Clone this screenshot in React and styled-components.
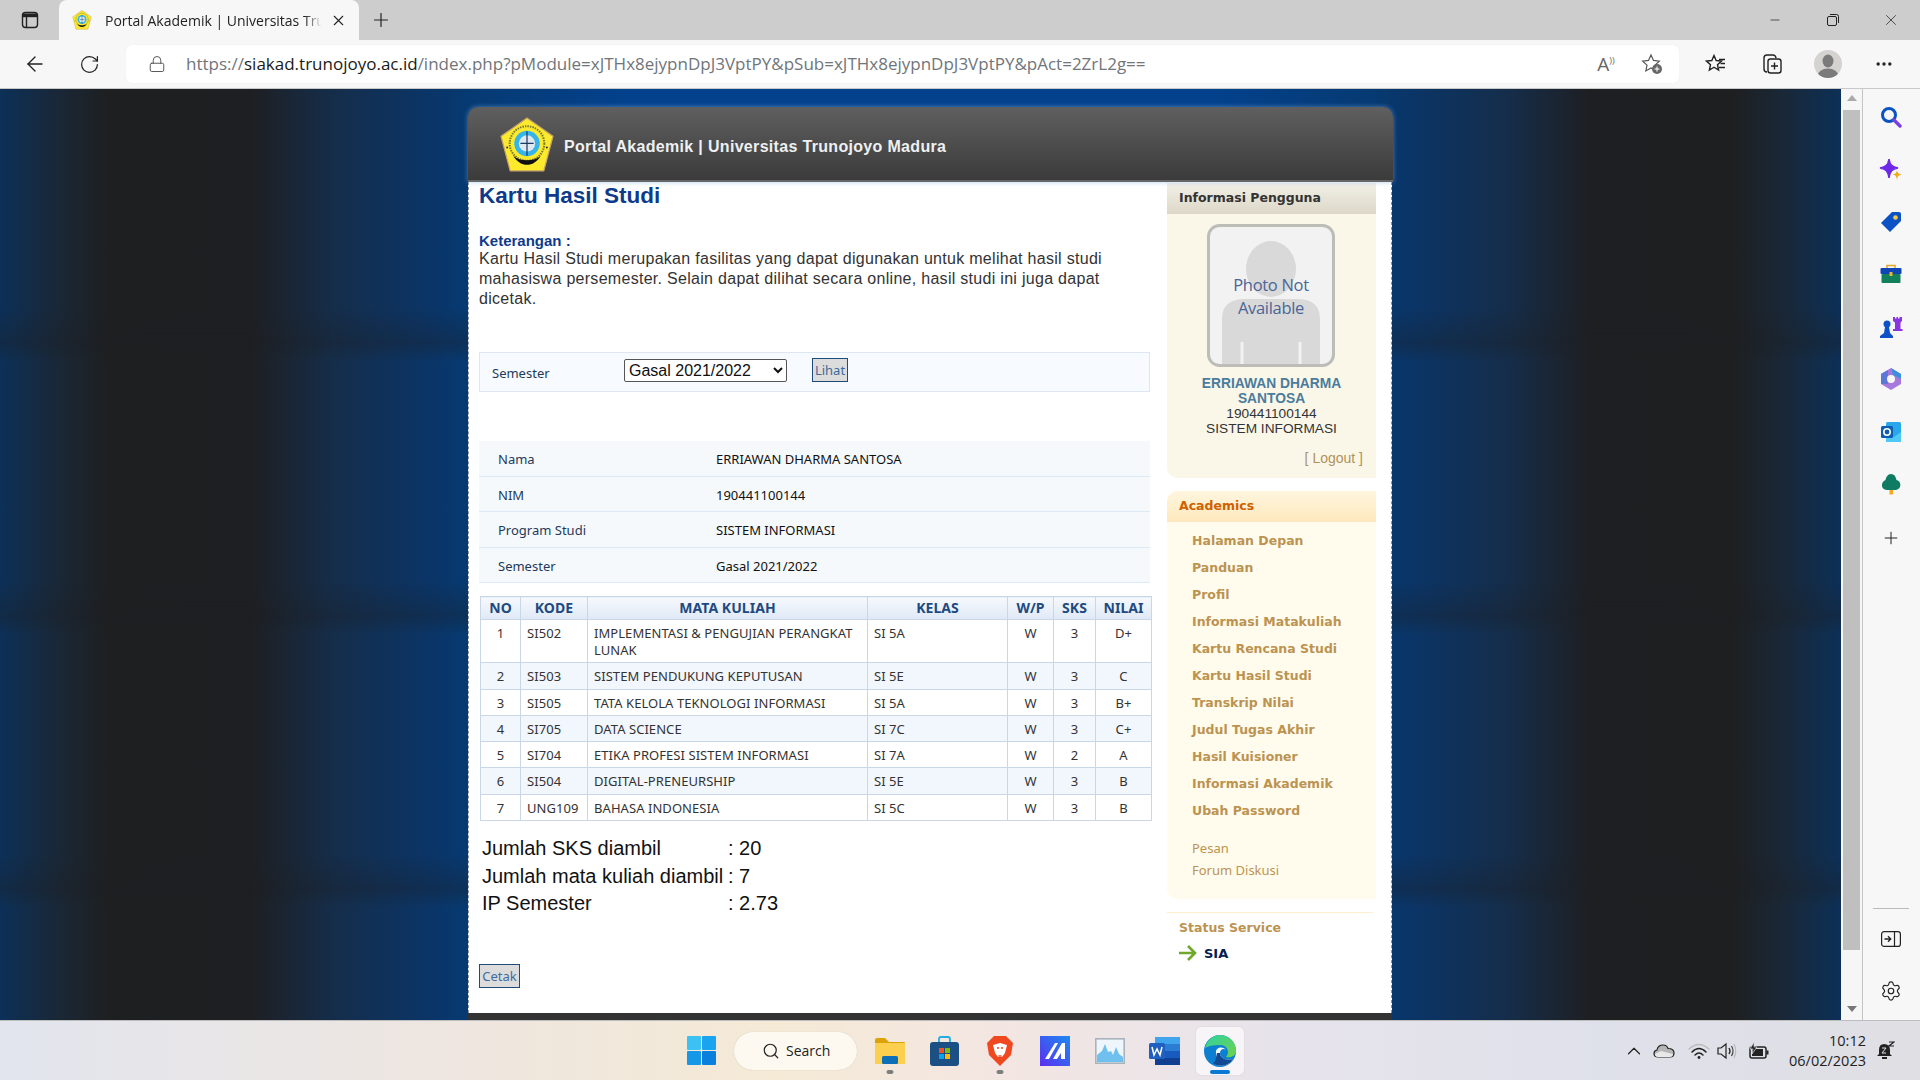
import React from 'react';
import styled, { createGlobalStyle } from 'styled-components';
import {
  ArrowLeft, RotateCw, Lock, Plus, X, Minus, Search, ChevronUp, Settings, MoreHorizontal,
} from 'lucide-react';

const Global = createGlobalStyle`
  html, body { margin: 0; padding: 0; overflow: hidden; }
  body { font-family: "Liberation Sans", Arial, sans-serif; }
  * { box-sizing: border-box; }
`;

const TAHOMA = '"Noto Sans", "DejaVu Sans", sans-serif';
const BOLD_TAHOMA = '"DejaVu Sans", sans-serif';
const SEGOE = '"Open Sans", "Noto Sans", sans-serif';

const Shell = styled.div`
  width: 1920px;
  height: 1080px;
  display: flex;
  flex-direction: column;
  overflow: hidden;
`;

/* browser chrome */
const TabStrip = styled.div`
  height: 40px;
  flex: none;
  background: #cdcdcd;
  display: flex;
  align-items: flex-end;
`;

const TabToggle = styled.div`
  width: 59px;
  height: 40px;
  display: flex;
  align-items: center;
  justify-content: center;
`;

const Tab = styled.div`
  width: 300px;
  height: 40px;
  background: #f7f7f7;
  border-radius: 8px 8px 0 0;
  display: flex;
  align-items: center;
  padding: 0 12px 0 13px;
  font-family: ${SEGOE};
  font-size: 14px;
  color: #222;
`;

const TabTitle = styled.span`
  width: 217px;
  margin-left: 13px;
  white-space: nowrap;
  overflow: hidden;
  -webkit-mask-image: linear-gradient(90deg, #000 92%, transparent);
  mask-image: linear-gradient(90deg, #000 92%, transparent);
`;

const TabClose = styled.span`
  margin-left: 8px;
  display: flex;
`;

const NewTab = styled.div`
  width: 44px;
  height: 40px;
  display: flex;
  align-items: center;
  justify-content: center;
`;

const WindowControls = styled.div`
  margin-left: auto;
  height: 40px;
  display: flex;
  align-items: center;
`;

const WindowButton = styled.div`
  width: 58px;
  height: 40px;
  display: flex;
  align-items: center;
  justify-content: center;
`;

const Toolbar = styled.div`
  height: 49px;
  flex: none;
  background: #f7f7f7;
  border-bottom: 1px solid #c8c8c8;
  display: flex;
  align-items: center;
  padding-left: 7px;
`;

const NavButton = styled.div`
  width: ${(p) => p.$w || 55}px;
  height: 40px;
  display: flex;
  align-items: center;
  justify-content: center;
  color: #222;
`;

const AddressBar = styled.div`
  width: 1553px;
  height: 38px;
  margin: 0 9px 0 9px;
  background: #fff;
  border-radius: 6px;
  display: flex;
  align-items: center;
  padding: 0 4px 0 22px;
  font-family: ${SEGOE};
  font-size: 17px;
  color: #70757a;
  box-shadow: 0 0 1px rgba(0, 0, 0, 0.08);
`;

const Url = styled.span`
  margin: -2px 0 0 20px;
  white-space: nowrap;
`;

const UrlHost = styled.span`
  color: #1a1a1a;
`;

const AddressActions = styled.div`
  margin-left: auto;
  display: flex;
`;

const ReadAloud = styled.span`
  font-family: ${SEGOE};
  font-size: 19px;
  color: #666;
  position: relative;
`;

const AloudWaves = styled.sup`
  font-size: 9px;
`;

const Avatar = styled.div`
  width: 28px;
  height: 28px;
  border-radius: 50%;
  background: #d4d3d0;
  overflow: hidden;
  display: flex;
`;

const Workspace = styled.div`
  flex: 1;
  display: flex;
  min-height: 0;
`;

/* the web page */
const Page = styled.div`
  width: 1841px;
  height: 100%;
  overflow: hidden;
  padding: 18px 0 0 468px;
  background-image:
    linear-gradient(180deg, transparent 0, transparent 80%, rgba(28, 30, 34, 0.3) 93%, transparent 100%),
    linear-gradient(
      90deg,
      #0c3058 0,
      #1a2736 60px,
      #1e1f20 110px,
      #1e1f22 250px,
      #152d4a 333px,
      #0a3568 433px,
      #063a72 468px,
      #04418c 620px,
      #04418c 1220px,
      #063a72 1373px,
      #0a3568 1408px,
      #152d4a 1508px,
      #1e1f22 1591px,
      #1e1f20 1731px,
      #1a2736 1781px,
      #0c3058 1841px
    );
  background-size: 100% 273px, 100% 100%;
`;

const Wrapper = styled.div`
  width: 925px;
`;

const SiteHeader = styled.header`
  height: 75px;
  background: linear-gradient(180deg, #5f5f5f, #3b3b3b);
  border-bottom: 2px solid #666;
  border-radius: 10px 10px 0 0;
  box-shadow: 0 0 5px rgba(130, 180, 230, 0.6);
  display: flex;
  align-items: center;
  padding: 2px 0 0 31px;
  position: relative;
`;

const SiteTitle = styled.h2`
  margin: 4px 0 0 9px;
  font-size: 16px;
  letter-spacing: 0.32px;
  font-weight: bold;
  color: #eef0f2;
`;

const SiteBody = styled.div`
  height: 831px;
  width: 924px;
  background: #fff;
  border-left: 1px dashed #8a93a0;
  border-right: 1px dashed #8a93a0;
  padding-left: 10px;
  display: flex;
`;

const SiteFooter = styled.div`
  height: 20px;
  width: 924px;
  background: #333;
`;

const Main = styled.main`
  width: 671px;
  flex: none;
`;

const PageTitle = styled.h1`
  margin: 0;
  height: 26px;
  line-height: 28px;
  font-size: 22.5px;
  font-weight: bold;
  color: #0e3a8c;
`;

const NoteLabel = styled.div`
  margin-top: 25px;
  height: 16px;
  line-height: 15px;
  font-size: 15px;
  font-weight: bold;
  color: #0e3a8c;
`;

const NoteText = styled.p`
  margin: 0;
  width: 640px;
  font-size: 16px;
  letter-spacing: 0.29px;
  line-height: 20px;
  color: #333;
`;

const FilterBox = styled.div`
  margin-top: 43px;
  height: 40px;
  background: #f7fafe;
  border: 1px solid #dde6f1;
  display: flex;
  align-items: center;
  padding-left: 12px;
`;

const FilterLabel = styled.span`
  width: 132px;
  padding-top: 2px;
  font-family: ${TAHOMA};
  font-size: 13px;
  color: #1e3a5a;
`;

const SemesterSelect = styled.select`
  width: 163px;
  height: 23px;
  font-family: "Liberation Sans", sans-serif;
  font-size: 16px;
  color: #111;
  background: #fff;
  border: 1px solid #555;
  border-radius: 2px;
  margin-top: -3px;
`;

const ActionButton = styled.button`
  width: ${(p) => p.$w}px;
  height: 24px;
  padding: 0;
  background: #dcdcdc;
  border: 1px solid #1e4a7c;
  font-family: ${TAHOMA};
  font-size: 13px;
  color: #3d6c9c;
`;

const FilterAction = styled(ActionButton)`
  margin: -4px 0 0 25px;
`;

const InfoList = styled.div`
  margin-top: 49px;
  background: #f6f9fc;
`;

const InfoRow = styled.div`
  height: 35.5px;
  border-bottom: 1px solid #dcebf7;
  display: flex;
  align-items: center;
  padding: 2px 0 0 19px;
  font-family: ${TAHOMA};
  font-size: 13px;
`;

const InfoLabel = styled.span`
  width: 218px;
  color: #1e3a5a;
`;

const InfoValue = styled.span`
  color: #111;
`;

const Grades = styled.table`
  margin: 13px 0 0 1px;
  width: 671px;
  table-layout: fixed;
  border-collapse: collapse;
  font-family: ${TAHOMA};
  font-size: 13px;
  letter-spacing: 0.06px;
  color: #333;
`;

const Th = styled.th`
  height: 23px;
  padding: 0 0 2px;
  border: 1px solid #c8d6e6;
  background: linear-gradient(180deg, #f6f9fd, #dfe9f6);
  color: #1e4a80;
  font-size: 14px;
  font-weight: bold;
  text-align: center;
`;

const Td = styled.td`
  height: ${(p) => p.$h}px;
  padding: 5px 6px 0;
  line-height: 17px;
  vertical-align: top;
  border: 1px solid #c8d6e6;
  text-align: ${(p) => (p.$center ? 'center' : 'left')};
`;

const Tr = styled.tr`
  background: ${(p) => (p.$odd ? '#f2f6fd' : '#fff')};
`;

const Summary = styled.div`
  margin: 14px 0 0 3px;
  display: grid;
  grid-template-columns: 246px auto;
  justify-content: start;
  font-size: 20px;
  line-height: 27.5px;
  color: #111;
`;

const PrintAction = styled(ActionButton)`
  display: block;
  margin-top: 46px;
`;

/* right column */
const Aside = styled.aside`
  width: 209px;
  margin: 1px 0 0 17px;
  flex: none;
`;

const Panel = styled.section`
  background: ${(p) => p.$bg};
  border-radius: ${(p) => (p.$round ? '10px 0 0 10px' : '0 0 0 10px')};
  height: ${(p) => p.$h}px;
  margin-top: ${(p) => p.$mt || 0}px;
`;

const PanelHead = styled.h3`
  margin: 0;
  height: 31px;
  line-height: 30px;
  padding-left: 12px;
  background: linear-gradient(180deg, ${(p) => p.$from}, ${(p) => p.$to});
  border-radius: ${(p) => (p.$round ? '10px 0 0 0' : '0')};
  font-family: ${BOLD_TAHOMA};
  font-size: 12.5px;
  font-weight: bold;
  color: ${(p) => p.$color};
`;

const Photo = styled.div`
  width: 128px;
  height: 143px;
  margin: 10px 0 0 40px;
  position: relative;
`;

const PhotoCaption = styled.span`
  position: absolute;
  left: 0;
  right: 0;
  top: 49px;
  text-align: center;
  font-family: "Open Sans", sans-serif;
  font-size: 16.5px;
  line-height: 23px;
  letter-spacing: -0.3px;
  color: #4a6596;
`;

const UserName = styled.div`
  margin-top: 9px;
  text-align: center;
  font-size: 13.8px;
  line-height: 15px;
  font-weight: bold;
  color: #4a7c9c;
`;

const UserLine = styled.div`
  text-align: center;
  font-size: 13.7px;
  line-height: 15px;
  color: #333;
`;

const Logout = styled.a`
  display: block;
  margin-top: 14px;
  padding-right: 13px;
  text-align: right;
  font-size: 14px;
  color: #b0935a;
`;

const MenuList = styled.nav`
  padding: 5px 0 0 25px;
`;

const MenuLink = styled.a`
  display: block;
  height: 27px;
  line-height: 27px;
  font-family: ${BOLD_TAHOMA};
  font-size: 12.5px;
  font-weight: bold;
  color: #bc9350;
`;

const MinorLink = styled.a`
  display: block;
  height: 22px;
  line-height: 22px;
  font-family: ${TAHOMA};
  font-size: 13px;
  color: #bc9350;
`;

const MinorList = styled.div`
  margin-top: 13px;
`;

const StatusBlock = styled.div`
  margin-top: 13px;
  width: 206px;
  border-top: 1px solid #fdf0d0;
  padding: 6px 0 0 12px;
`;

const StatusTitle = styled.div`
  font-family: ${BOLD_TAHOMA};
  font-size: 12.5px;
  font-weight: bold;
  line-height: 18px;
  color: #bc9350;
`;

const StatusRow = styled.div`
  margin-top: 8px;
  display: flex;
  align-items: center;
  gap: 7px;
  font-family: ${BOLD_TAHOMA};
  font-size: 13px;
  font-weight: bold;
  color: #06204f;
`;

/* scrollbar and edge sidebar */
const Scrollbar = styled.div`
  width: 22px;
  flex: none;
  background: #f6f6f6;
  border-right: 1px solid #c4c4c4;
  display: flex;
  flex-direction: column;
  align-items: center;
  padding-top: 6px;
  height: 100%;
`;

const ScrollArrow = styled.div`
  width: 0;
  height: 0;
  border-left: 5px solid transparent;
  border-right: 5px solid transparent;
  ${(p) => (p.$down ? 'border-top: 6px solid #777;' : 'border-bottom: 6px solid #aaa;')}
  ${(p) => (p.$down ? 'margin: auto 0 8px;' : '')}
`;

const ScrollThumb = styled.div`
  width: 17px;
  height: 840px;
  margin-top: 9px;
  margin-right: 1px;
  background: #bfbfbf;
  flex: none;
`;

const EdgeBar = styled.div`
  width: 57px;
  flex: none;
  background: #f7f7f7;
  display: flex;
  flex-direction: column;
  align-items: center;
  padding: 2px 2px 0 0;
`;

const EdgeSlot = styled.div`
  width: 100%;
  height: ${(p) => p.$h || 52.4}px;
  display: flex;
  align-items: center;
  justify-content: center;
  flex: none;
  color: #222;
`;

const EdgeRule = styled.div`
  width: 36px;
  height: 1px;
  background: #bbb;
  margin-top: auto;
`;

/* windows taskbar */
const Taskbar = styled.div`
  height: 60px;
  flex: none;
  border-top: 1px solid #bdbdbd;
  background: linear-gradient(
    90deg,
    #e2e5ee 0,
    #efe6de 500px,
    #f5ead6 780px,
    #f3e6e2 1000px,
    #e6e3ec 1300px,
    #dfe1ea 1600px,
    #dfdfe4 1920px
  );
  display: flex;
  align-items: center;
  padding-left: 687px;
  position: relative;
`;

const TaskIcon = styled.div`
  width: ${(p) => p.$w}px;
  margin-left: ${(p) => p.$ml}px;
  height: 48px;
  display: flex;
  align-items: center;
  justify-content: center;
  flex: none;
  position: relative;
  border-radius: 5px;
  ${(p) => p.$active && 'background: rgba(255,255,255,.62); box-shadow: 0 0 1px rgba(0,0,0,.25);'}
`;

const RunDot = styled.span`
  position: absolute;
  bottom: 1px;
  left: 50%;
  transform: translateX(-50%);
  width: ${(p) => (p.$active ? 20 : 7)}px;
  height: 3.5px;
  border-radius: 2px;
  background: ${(p) => (p.$active ? '#0a78d4' : '#7e7e7e')};
`;

const SearchPill = styled.div`
  width: 123px;
  height: 38px;
  margin-left: 18px;
  border-radius: 19px;
  background: #fdf9f1;
  box-shadow: 0 0 1px rgba(0, 0, 0, 0.2);
  display: flex;
  align-items: center;
  padding-left: 28px;
  gap: 6px;
  font-family: ${SEGOE};
  font-size: 14px;
  color: #222;
`;

const Tray = styled.div`
  margin-left: auto;
  display: flex;
  align-items: center;
  height: 100%;
  padding-right: 14px;
  color: #222;
`;

const TrayIcon = styled.div`
  width: ${(p) => p.$w}px;
  display: flex;
  align-items: center;
  justify-content: center;

  svg {
    flex: none;
  }
`;

const Clock = styled.div`
  width: 83px;
  text-align: right;
  font-family: ${SEGOE};
  font-size: 14.5px;
  line-height: 20px;
  white-space: nowrap;
  color: #222;
`;

/* drawings */
const Crest = ({ size }) => (
  <svg width={size} height={size} viewBox="0 0 55 55">
    <path d="M27.5 1 L53 19 L44 53 L11 53 L2 19 Z" fill="#fdea2c" stroke="#c9a36b" strokeWidth="1.2" strokeLinejoin="round" />
    <circle cx="27.5" cy="26" r="17" fill="none" stroke="#7a7a30" strokeWidth="2" strokeDasharray="1.5 1" />
    <circle cx="27.5" cy="26" r="12.5" fill="#35b5ea" />
    <circle cx="27.5" cy="26" r="8" fill="#dfe8f0" />
    <path d="M27.5 14v24M21 26h13" stroke="#1d3a66" strokeWidth="1.2" />
    <path d="M14 38 C21 50 34 50 41 38 C35 44 20 44 14 38 Z" fill="#111" />
    <circle cx="8" cy="30" r="1" fill="#333" />
    <circle cx="47" cy="30" r="1" fill="#333" />
  </svg>
);

const PhotoArt = () => (
  <svg width="128" height="143" viewBox="0 0 128 143">
    <rect x="1.5" y="1.5" width="125" height="140" rx="11" fill="#f2f2f2" stroke="#bdbdb8" strokeWidth="3" />
    <ellipse cx="64" cy="45" rx="25" ry="28" fill="#d9d9d9" />
    <path d="M15 140 V 95 Q15 75 38 75 H90 Q113 75 113 95 V140 Z" fill="#d9d9d9" />
    <path d="M35 118v22M93 118v22" stroke="#f2f2f2" strokeWidth="3" />
  </svg>
);

const GreenArrow = () => (
  <svg width="18" height="16" viewBox="0 0 18 16">
    <path d="M0 8h15M9 1l7 7-7 7" fill="none" stroke="#6fa82a" strokeWidth="2.6" />
  </svg>
);

const TabsIcon = () => (
  <svg width="18" height="18" viewBox="0 0 18 18" fill="none" stroke="#222" strokeWidth="1.4">
    <rect x="1.5" y="1.5" width="15" height="15" rx="3" />
    <path d="M1.5 5.5h15" />
    <path d="M2 2.5h14v3H2z" fill="#222" stroke="none" />
    <path d="M5.5 5.5v11" />
  </svg>
);

const RestoreIcon = () => (
  <svg width="12" height="12" viewBox="0 0 12 12" fill="none" stroke="#222">
    <rect x="0.5" y="2.5" width="9" height="9" rx="1.5" />
    <path d="M3 .5h6.5a2 2 0 0 1 2 2V9" />
  </svg>
);

const StarPlus = () => (
  <svg width="22" height="22" viewBox="0 0 22 22">
    <path d="M10 2l2.5 5.4 5.8.7-4.3 4 1.1 5.8L10 15l-5.1 2.9L6 12.1l-4.3-4 5.8-.7z" fill="none" stroke="#555" strokeWidth="1.2" />
    <circle cx="16" cy="16" r="5" fill="#666" />
    <path d="M16 13.5v5M13.5 16h5" stroke="#fff" strokeWidth="1.1" />
  </svg>
);

const Favorites = () => (
  <svg width="22" height="22" viewBox="0 0 22 22" fill="none" stroke="#222" strokeWidth="1.4">
    <path d="M9 2.5l2.2 5 5.3.6-4 3.6 1.1 5.3L9 14.2l-4.6 2.8 1.1-5.3-4-3.6 5.3-.6z" />
    <path d="M14 6.5h6M15.5 10.5h4.5M14 14.5h6" />
  </svg>
);

const Collections = () => (
  <svg width="22" height="22" viewBox="0 0 22 22" fill="none" stroke="#222" strokeWidth="1.4">
    <path d="M6 19 Q3 19 3 16 V5 Q3 2 6 2 H12 Q14.5 2 15 5" />
    <rect x="7" y="6" width="13" height="14" rx="2.5" />
    <path d="M13.5 9.5v7M10 13h7" />
  </svg>
);

const Person = () => (
  <svg width="28" height="28" viewBox="0 0 28 28">
    <ellipse cx="14" cy="11" rx="5.5" ry="6.5" fill="#7b7b7b" />
    <ellipse cx="14" cy="26" rx="10.5" ry="7.5" fill="#7b7b7b" />
  </svg>
);

const EdgeIcons = [
  <svg key="a" width="22" height="22" viewBox="0 0 22 22"><circle cx="9" cy="9" r="6.5" fill="none" stroke="#0b52c4" strokeWidth="3" /><path d="M14 14l6 6" stroke="#7b3fe0" strokeWidth="3.4" strokeLinecap="round" /></svg>,
  <svg key="b" width="24" height="24" viewBox="0 0 24 24"><path d="M10 1 C11 7 13 9 19 10 C13 11 11 13 10 20 C9 13 7 11 1 10 C7 9 9 7 10 1 Z" fill="#6d28e8" stroke="#6d28e8" strokeWidth="1.5" /><path d="M18 12 C18.500 15 19.500 16 23 16.500 C19.500 17 18.500 18 18 22 C17.500 18 16.500 17 13.500 16.500 C16.500 16 17.500 15 18 12 Z" fill="#f5a914" /></svg>,
  <svg key="c" width="22" height="22" viewBox="0 0 22 22"><path d="M12 1 H19 Q21 1 21 3 V10 L10 21 L1 12 Z" fill="#0b52c4" /><circle cx="15.500" cy="6.500" r="2.300" fill="#f7c948" /></svg>,
  <svg key="d" width="22" height="20" viewBox="0 0 22 20"><path d="M7 4V1.500h8V4" fill="none" stroke="#e3a72f" strokeWidth="1.500" /><rect x="0.500" y="4" width="21" height="6" fill="#0f45b5" rx="1" /><rect x="1.500" y="10" width="19" height="9" fill="#12805c" rx="1" /><rect x="9.500" y="8" width="3" height="4" fill="#f0b429" /></svg>,
  <svg key="e" width="24" height="24" viewBox="0 0 24 24"><circle cx="8" cy="9" r="3.500" fill="#0f52c7" /><path d="M6 12h4l1 6 3 3v2H1v-2l4-3z" fill="#0f52c7" /><path d="M14 2h2v1.500h1.500V2h1.500v1.500h1.500V2H23v4l-1.500 1.500V14h2v2H14v-2h2V7.500L14 6z" fill="#8a36e0" /></svg>,
  <svg key="f" width="22" height="24" viewBox="0 0 22 24"><path d="M11 1 L21 7 V17 L11 23 L1 17 V7 Z" fill="#a779dd" /><path d="M11 1 L21 7 V12 L13 8 Z" fill="#3a90dd" /><path d="M1 7 L8 3 V17 L1 17 Z" fill="#5c79d8" /><circle cx="11" cy="12" r="4" fill="#f7f7f7" /></svg>,
  <svg key="g" width="22" height="22" viewBox="0 0 22 22"><rect x="6" y="1" width="15" height="20" rx="1.500" fill="#28a8ea" /><path d="M6 12l8 4 7-5v10H6z" fill="#50c8f5" /><rect x="1" y="5" width="12" height="12" rx="1.500" fill="#0b5fb0" /><circle cx="7" cy="11" r="3.200" fill="none" stroke="#fff" strokeWidth="1.600" /></svg>,
  <svg key="h" width="20" height="22" viewBox="0 0 20 22"><path d="M10 1 C14 1 15 5 15.500 7 C19 8 20 11 19 14 C18 16.500 15 17 13 17 H7 C4 17 1.500 16 1 13 C0.500 10.500 2 8 4.500 7 C5 4 7 1 10 1 Z" fill="#0f7b63" /><rect x="8.500" y="17" width="3.500" height="4.500" fill="#f2a91f" /></svg>,
];

const PanelToggle = () => (
  <svg width="20" height="16" viewBox="0 0 20 16" fill="none" stroke="#222" strokeWidth="1.200">
    <rect x="0.600" y="0.600" width="18.800" height="14.800" rx="2.500" />
    <path d="M13.500 1v14" />
    <path d="M3.500 8h6M7 5.200L9.800 8 7 10.800" strokeWidth="1.300" />
  </svg>
);

const WinLogo = () => (
  <svg width="29" height="29" viewBox="0 0 29 29">
    <rect width="14" height="14" rx="1" fill="#3cc1f5" />
    <rect x="15" width="14" height="14" rx="1" fill="#1aa3ee" />
    <rect y="15" width="14" height="14" rx="1" fill="#1697e8" />
    <rect x="15" y="15" width="14" height="14" rx="1" fill="#0a7fdc" />
  </svg>
);

const FolderIcon = () => (
  <svg width="30" height="28" viewBox="0 0 30 28">
    <path d="M0 3 Q0 1 2 1 H10 L14 5 H29 Q30 5 30 6 V14 H0 Z" fill="#dba308" />
    <path d="M0 6 H30 V27 H0 Z" fill="#fcd04e" />
    <rect x="7" y="19" width="16" height="8" rx="1.500" fill="#0d6fb8" />
  </svg>
);

const StoreIcon = () => (
  <svg width="29" height="30" viewBox="0 0 29 30">
    <path d="M9 7V3 Q9 1 11 1 H18 Q20 1 20 3 V7" fill="none" stroke="#22aee0" strokeWidth="1.800" />
    <rect y="6" width="29" height="24" rx="3" fill="#1c4f83" />
    <rect x="9" y="12" width="5" height="5" fill="#f25022" />
    <rect x="15" y="12" width="5" height="5" fill="#7fba00" />
    <rect x="9" y="18" width="5" height="5" fill="#00a4ef" />
    <rect x="15" y="18" width="5" height="5" fill="#ffb900" />
  </svg>
);

const BraveIcon = () => (
  <svg width="26" height="30" viewBox="0 0 26 30">
    <path d="M7 0 H19 L23 4 L26 7 L24 19 L13 30 L2 19 L0 7 L3 4 Z" fill="#f0481f" />
    <path d="M6 9 L13 7 L20 9 L18 17 L15 21 H11 L8 17 Z" fill="#fff" />
    <path d="M10 12h2M14 12h2M11.500 20h3" stroke="#f0481f" strokeWidth="1.500" />
  </svg>
);

const MonitorApp = () => (
  <svg width="30" height="30" viewBox="0 0 30 30">
    <defs>
      <linearGradient id="ma" x1="0" y1="1" x2="1" y2="0">
        <stop offset="0" stopColor="#5b2ef0" />
        <stop offset="1" stopColor="#1c8cf0" />
      </linearGradient>
    </defs>
    <rect width="30" height="30" fill="url(#ma)" />
    <path d="M5 23 L15 7 H18 L9 23 Z M13 23 L22 7 H25 V23 H21 V17 L17 23 Z" fill="#fff" />
  </svg>
);

const ChartApp = () => (
  <svg width="30" height="26" viewBox="0 0 30 26">
    <rect x="0.800" y="0.800" width="28.400" height="24.400" fill="#eef5fb" stroke="#a9b3bc" strokeWidth="1.600" />
    <path d="M2 24 V17 L7 13 L10 6 L13 14 L16 13 L18 17 L21 9 L24 16 L28 19 V24 Z" fill="#6fc0ee" />
  </svg>
);

const WordIcon = () => (
  <svg width="31" height="30" viewBox="0 0 31 30">
    <rect x="6" y="1" width="25" height="7" fill="#41a5ee" />
    <rect x="6" y="8" width="25" height="7" fill="#2b7cd3" />
    <rect x="6" y="15" width="25" height="7" fill="#185abd" />
    <rect x="6" y="22" width="25" height="7" fill="#103f91" />
    <rect y="7" width="16" height="16" rx="1.500" fill="#1e5fc0" />
    <path d="M3 11l2 8 3-6 3 6 2-8" fill="none" stroke="#fff" strokeWidth="1.500" />
  </svg>
);

const EdgeBrowser = () => (
  <svg width="32" height="32" viewBox="0 0 32 32">
    <defs>
      <linearGradient id="eg" x1="0" y1="0" x2="1" y2="1">
        <stop offset="0" stopColor="#2fd2a0" />
        <stop offset="1" stopColor="#6fd24a" />
      </linearGradient>
    </defs>
    <circle cx="16" cy="16" r="16" fill="#0c7fd1" />
    <path d="M1 13 C3 4 10 0 16 0 C25 0 32 7 32 16 C32 21 27 23 22 22 C26 18 24 10 16 10 C9 10 4 11 1 13 Z" fill="url(#eg)" />
    <path d="M12 17 C12 12 19 11 22 15 C20 13 16 14 16 18 C16 23 22 26 29 24 C25 31 15 33 10 28 C13 29 12 22 12 17 Z" fill="#fff" opacity="0.95" />
    <path d="M16 18 C16 23 22 26 29 24 C25 31 15 33 9 28 C12 27 12 21 13 18 Z" fill="#114a93" />
  </svg>
);

const CloudIcon = () => (
  <svg width="22" height="15" viewBox="0 0 22 15">
    <path d="M5 14 Q1 14 1 10.500 Q1 7.500 4 7 Q5 2 10 2 Q14 2 15 5.500 Q21 5.500 21 10 Q21 14 17 14 Z" fill="#b5b5b5" stroke="#222" strokeWidth="1.200" />
    <path d="M5 14 Q2 14 2 11 L8 8 L20 11 Q20 14 17 14 Z" fill="#e8e8e8" />
  </svg>
);

const WifiIcon = () => (
  <svg width="22" height="16" viewBox="0 0 22 16" fill="none" strokeLinecap="round">
    <path d="M1 6 Q11 -3 21 6" stroke="#bbb" strokeWidth="1.300" />
    <path d="M4 9 Q11 2 18 9" stroke="#222" strokeWidth="1.500" />
    <path d="M7 12 Q11 8 15 12" stroke="#222" strokeWidth="1.500" />
    <circle cx="11" cy="14.500" r="1.400" fill="#222" />
  </svg>
);

const SpeakerIcon = () => (
  <svg width="20" height="18" viewBox="0 0 20 18" fill="none" stroke="#222" strokeWidth="1.200">
    <path d="M1 6h3l5-4v14l-5-4H1z" />
    <path d="M12 6 Q14 9 12 12" strokeWidth="1.300" />
    <path d="M14.500 4 Q17.500 9 14.500 14" stroke="#444" />
    <path d="M17 2 Q20.500 9 17 16" stroke="#bbb" />
  </svg>
);

const BatteryIcon = () => (
  <svg width="20" height="18" viewBox="0 0 20 18">
    <rect x="1" y="5" width="16" height="11" rx="2" fill="none" stroke="#222" strokeWidth="1.500" />
    <rect x="3" y="7" width="11" height="7" fill="#222" />
    <rect x="17.500" y="8.500" width="2" height="4" fill="#222" />
    <path d="M5 0L1 7h3l-1 5 5-7H5z" fill="#222" stroke="#e2e2e8" strokeWidth=".7" />
  </svg>
);

const BellIcon = () => (
  <svg width="18" height="20" viewBox="0 0 18 20">
    <path d="M7 3 Q13 3 13 9 V13 L15 15 H0 L2 13 V9 Q2 3 7 3 Z" fill="#222" />
    <path d="M5 17h5" stroke="#222" strokeWidth="2" />
    <path d="M5 7h4l-4 5h4" fill="none" stroke="#e2e2e8" strokeWidth="1" />
    <path d="M12 1h5l-5 4h5" fill="none" stroke="#222" strokeWidth="1.200" />
  </svg>
);

const gradeRows = [
  { h: 43, cells: ['1', 'SI502', 'IMPLEMENTASI & PENGUJIAN PERANGKAT LUNAK', 'SI 5A', 'W', '3', 'D+'] },
  { h: 27, cells: ['2', 'SI503', 'SISTEM PENDUKUNG KEPUTUSAN', 'SI 5E', 'W', '3', 'C'] },
  { h: 26, cells: ['3', 'SI505', 'TATA KELOLA TEKNOLOGI INFORMASI', 'SI 5A', 'W', '3', 'B+'] },
  { h: 26, cells: ['4', 'SI705', 'DATA SCIENCE', 'SI 7C', 'W', '3', 'C+'] },
  { h: 26, cells: ['5', 'SI704', 'ETIKA PROFESI SISTEM INFORMASI', 'SI 7A', 'W', '2', 'A'] },
  { h: 27, cells: ['6', 'SI504', 'DIGITAL-PRENEURSHIP', 'SI 5E', 'W', '3', 'B'] },
  { h: 26, cells: ['7', 'UNG109', 'BAHASA INDONESIA', 'SI 5C', 'W', '3', 'B'] },
];

const columnWidths = [40, 67, 280, 140, 46, 42, 56];
const headings = ['NO', 'KODE', 'MATA KULIAH', 'KELAS', 'W/P', 'SKS', 'NILAI'];
const infoRows = [
  ['Nama', 'ERRIAWAN DHARMA SANTOSA'],
  ['NIM', '190441100144'],
  ['Program Studi', 'SISTEM INFORMASI'],
  ['Semester', 'Gasal 2021/2022'],
];
const menuLinks = [
  'Halaman Depan', 'Panduan', 'Profil', 'Informasi Matakuliah', 'Kartu Rencana Studi', 'Kartu Hasil Studi',
  'Transkrip Nilai', 'Judul Tugas Akhir', 'Hasil Kuisioner', 'Informasi Akademik', 'Ubah Password',
];

const App = () => (
  <Shell>
    <Global />
    <TabStrip>
      <TabToggle><TabsIcon /></TabToggle>
      <Tab>
        <Crest size={20} />
        <TabTitle>Portal Akademik | Universitas Trunojoyo Madura</TabTitle>
        <TabClose><X size={17} strokeWidth={1.5} color="#222" /></TabClose>
      </Tab>
      <NewTab><Plus size={22} strokeWidth={1.3} color="#222" /></NewTab>
      <WindowControls>
        <WindowButton><Minus size={14} strokeWidth={1.2} color="#222" /></WindowButton>
        <WindowButton><RestoreIcon /></WindowButton>
        <WindowButton><X size={18} strokeWidth={1} color="#222" /></WindowButton>
      </WindowControls>
    </TabStrip>
    <Toolbar>
      <NavButton><ArrowLeft size={24} strokeWidth={1.4} /></NavButton>
      <NavButton><RotateCw size={21} strokeWidth={1.4} /></NavButton>
      <AddressBar>
        <Lock size={18} strokeWidth={1.3} color="#555" />
        <Url>https://<UrlHost>siakad.trunojoyo.ac.id</UrlHost>/index.php?pModule=xJTHx8ejypnDpJ3VptPY&amp;pSub=xJTHx8ejypnDpJ3VptPY&amp;pAct=2ZrL2g==</Url>
        <AddressActions>
          <NavButton $w={46}><ReadAloud>A<AloudWaves>))</AloudWaves></ReadAloud></NavButton>
          <NavButton $w={46}><StarPlus /></NavButton>
        </AddressActions>
      </AddressBar>
      <NavButton $w={56}><Favorites /></NavButton>
      <NavButton $w={56}><Collections /></NavButton>
      <NavButton $w={56}><Avatar><Person /></Avatar></NavButton>
      <NavButton $w={56}><MoreHorizontal size={20} strokeWidth={2} /></NavButton>
    </Toolbar>
    <Workspace>
      <Page>
        <Wrapper>
          <SiteHeader>
            <Crest size={56} />
            <SiteTitle>Portal Akademik | Universitas Trunojoyo Madura</SiteTitle>
          </SiteHeader>
          <SiteBody>
            <Main>
              <PageTitle>Kartu Hasil Studi</PageTitle>
              <NoteLabel>Keterangan :</NoteLabel>
              <NoteText>
                Kartu Hasil Studi merupakan fasilitas yang dapat digunakan untuk melihat hasil studi mahasiswa persemester. Selain dapat dilihat secara online, hasil studi ini juga dapat dicetak.
              </NoteText>
              <FilterBox>
                <FilterLabel>Semester</FilterLabel>
                <SemesterSelect defaultValue="gasal">
                  <option value="gasal">Gasal 2021/2022</option>
                </SemesterSelect>
                <FilterAction $w={36}>Lihat</FilterAction>
              </FilterBox>
              <InfoList>
                {infoRows.map(([label, value]) => (
                  <InfoRow key={label}>
                    <InfoLabel>{label}</InfoLabel>
                    <InfoValue>{value}</InfoValue>
                  </InfoRow>
                ))}
              </InfoList>
              <Grades>
                <colgroup>
                  {columnWidths.map((w, i) => <col key={i} width={w} />)}
                </colgroup>
                <thead>
                  <tr>{headings.map((h) => <Th key={h}>{h}</Th>)}</tr>
                </thead>
                <tbody>
                  {gradeRows.map((row, i) => (
                    <Tr key={row.cells[0]} $odd={i % 2 === 1}>
                      {row.cells.map((cell, j) => (
                        <Td key={j} $h={row.h} $center={j === 0 || j > 3}>{cell}</Td>
                      ))}
                    </Tr>
                  ))}
                </tbody>
              </Grades>
              <Summary>
                <span>Jumlah SKS diambil</span><span>: 20</span>
                <span>Jumlah mata kuliah diambil</span><span>: 7</span>
                <span>IP Semester</span><span>: 2.73</span>
              </Summary>
              <PrintAction $w={41}>Cetak</PrintAction>
            </Main>
            <Aside>
              <Panel $bg="#faf7e9" $h={295} $round={false}>
                <PanelHead $from="#f2f0e7" $to="#dcd7c7" $color="#333">Informasi Pengguna</PanelHead>
                <Photo>
                  <PhotoArt />
                  <PhotoCaption>Photo Not<br />Available</PhotoCaption>
                </Photo>
                <UserName>ERRIAWAN DHARMA<br />SANTOSA</UserName>
                <UserLine>190441100144</UserLine>
                <UserLine>SISTEM INFORMASI</UserLine>
                <Logout>[ Logout ]</Logout>
              </Panel>
              <Panel $bg="#fffcee" $h={408} $mt={13} $round>
                <PanelHead $from="#fff6de" $to="#fee8bd" $color="#d06000" $round>Academics</PanelHead>
                <MenuList>
                  {menuLinks.map((link) => <MenuLink key={link}>{link}</MenuLink>)}
                  <MinorList>
                    <MinorLink>Pesan</MinorLink>
                    <MinorLink>Forum Diskusi</MinorLink>
                  </MinorList>
                </MenuList>
              </Panel>
              <StatusBlock>
                <StatusTitle>Status Service</StatusTitle>
                <StatusRow><GreenArrow /> SIA</StatusRow>
              </StatusBlock>
            </Aside>
          </SiteBody>
          <SiteFooter />
        </Wrapper>
      </Page>
      <Scrollbar>
        <ScrollArrow />
        <ScrollThumb />
        <ScrollArrow $down />
      </Scrollbar>
      <EdgeBar>
        {EdgeIcons.map((icon) => <EdgeSlot key={icon.key}>{icon}</EdgeSlot>)}
        <EdgeSlot $h={56}><Plus size={20} strokeWidth={1.2} /></EdgeSlot>
        <EdgeRule />
        <EdgeSlot $h={60}><PanelToggle /></EdgeSlot>
        <EdgeSlot $h={44}><Settings size={22} strokeWidth={1.3} /></EdgeSlot>
        <EdgeSlot $h={7} />
      </EdgeBar>
    </Workspace>
    <Taskbar>
      <TaskIcon $w={29} $ml={0}><WinLogo /></TaskIcon>
      <SearchPill><Search size={18} strokeWidth={1.6} />Search</SearchPill>
      <TaskIcon $w={30} $ml={18}><FolderIcon /><RunDot /></TaskIcon>
      <TaskIcon $w={29} $ml={25}><StoreIcon /></TaskIcon>
      <TaskIcon $w={26} $ml={28}><BraveIcon /><RunDot /></TaskIcon>
      <TaskIcon $w={30} $ml={27}><MonitorApp /></TaskIcon>
      <TaskIcon $w={30} $ml={25}><ChartApp /></TaskIcon>
      <TaskIcon $w={31} $ml={24}><WordIcon /></TaskIcon>
      <TaskIcon $w={48} $ml={16} $active><EdgeBrowser /><RunDot $active /></TaskIcon>
      <Tray>
        <TrayIcon $w={30}><ChevronUp size={22} strokeWidth={1.3} /></TrayIcon>
        <TrayIcon $w={30}><CloudIcon /></TrayIcon>
        <TrayIcon $w={40}><WifiIcon /></TrayIcon>
        <TrayIcon $w={16}><SpeakerIcon /></TrayIcon>
        <TrayIcon $w={48}><BatteryIcon /></TrayIcon>
        <Clock>10:12<br />06/02/2023</Clock>
        <TrayIcon $w={40}><BellIcon /></TrayIcon>
      </Tray>
    </Taskbar>
  </Shell>
);

export default App;
